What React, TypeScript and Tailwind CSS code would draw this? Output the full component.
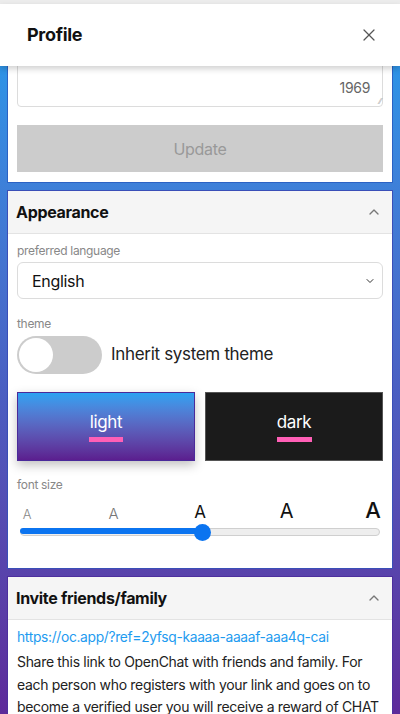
import { ChevronDown, ChevronUp, X } from 'lucide-react';

const sizes = [
  'text-[13px] text-[#888] font-light',
  'text-[15px] text-[#777] font-light',
  'text-[17px] text-[#111]',
  'text-[20px] text-[#111]',
  'text-[22px] text-[#111] font-medium',
];

function SectionHeader({ title }: { title: string }) {
  return (
    <div className="flex items-center justify-between h-[43px] px-[8px] bg-[#f5f5f5] border-b border-[#e3e3e3]">
      <h2 className="text-[16px] font-bold text-[#111]">{title}</h2>
      <ChevronUp className="w-[16px] h-[16px] text-[#777] mr-[2px]" strokeWidth={2} />
    </div>
  );
}

export default function App() {
  return (
    <div
      className="w-[400px] h-[714px] flex flex-col overflow-hidden bg-[#ececec] tracking-[-0.02em]"
      style={{ fontFamily: 'Inter, "Noto Sans", sans-serif' }}
    >
      <div className="h-[4px] shrink-0" />
      <header className="relative z-10 h-[62px] shrink-0 bg-white flex items-center justify-between pl-[27px] pr-[21px] shadow-[0_3px_6px_rgba(0,0,0,0.18)]">
        <h1 className="text-[18px] font-bold text-[#111] -mt-[2px]">Profile</h1>
        <X className="w-[20px] h-[20px] text-[#555]" strokeWidth={1.5} />
      </header>

      <main className="flex-1 overflow-hidden bg-gradient-to-b from-[#2e93e6] via-[#4a5fc2] to-[#5d2a9a] px-[7px]">
        <div className="flex flex-col gap-[7px] -mt-[58px]">
          {/* profile card, scrolled */}
          <section className="bg-white border border-[#2b62c4] px-[9px] pt-[8px] pb-[10px]">
            <div className="relative h-[90px] border border-[#dcdcdc] rounded-[4px] flex items-end justify-end pr-[12px] pb-[8px]">
              <span className="text-[14px] text-[#666]">1969</span>
              <span className="absolute right-[1px] bottom-[1px] text-[7px] leading-none text-[#aaa]">⁄⁄</span>
            </div>
            <button className="mt-[18px] w-full h-[47px] bg-[#cccccc] text-[16px] text-[#999]">Update</button>
          </section>

          {/* appearance card */}
          <section className="bg-white border border-[#3a4fb8]">
            <SectionHeader title="Appearance" />
            <div className="px-[9px] pb-[28px]">
              <p className="mt-[9px] text-[12px] leading-[16px] text-[#888]">preferred language</p>
              <div className="mt-[3px] h-[37px] border border-[#dcdcdc] rounded-[6px] flex items-center justify-between pl-[14px] pr-[6px]">
                <span className="text-[16px] text-[#111]">English</span>
                <ChevronDown className="w-[12px] h-[12px] text-[#333]" strokeWidth={2} />
              </div>
              <p className="mt-[17px] text-[12px] leading-[16px] text-[#888]">theme</p>
              <div className="mt-[4px] flex items-center gap-[9px]">
                <div className="w-[85px] h-[38px] rounded-full bg-[#cccccc] flex items-center px-[2px]">
                  <div className="w-[34px] h-[34px] rounded-full bg-white" />
                </div>
                <span className="text-[17px] text-[#222]">Inherit system theme</span>
              </div>
              <div className="mt-[18px] grid grid-cols-2 gap-[10px]">
                <div className="h-[69px] flex flex-col items-center justify-center bg-gradient-to-b from-[#2aa2f2] to-[#5b1e8f] border border-[#4a2a9a] shadow-[0_4px_10px_rgba(0,0,0,0.25)]">
                  <span className="text-[17px] text-white leading-[22px]">light</span>
                  <span className="mt-[4px] w-[34px] h-[5px] bg-[#ff5fb6]" />
                </div>
                <div className="h-[69px] flex flex-col items-center justify-center bg-[#1b1b1b] border border-[#555]">
                  <span className="text-[17px] text-white leading-[22px]">dark</span>
                  <span className="mt-[4px] w-[35px] h-[5px] bg-[#ff5fb6]" />
                </div>
              </div>
              <p className="mt-[16px] text-[12px] leading-[16px] text-[#888]">font size</p>
              <div className="mt-[4px] flex items-end justify-between h-[24px]">
                {sizes.map((cls, i) => (
                  <span key={i} className="w-[20px] flex justify-center">
                    <span className={`${cls} leading-none`}>A</span>
                  </span>
                ))}
              </div>
              <div className="mt-[3px] relative h-[16px] flex items-center px-[3px]">
                <div className="w-full h-[8px] rounded-full bg-[#eeeeee] border border-[#cfcfcf] flex">
                  <div className="w-1/2 h-full rounded-full bg-[#0b74f0] -m-[1px]" />
                </div>
                <div className="absolute left-[177px] w-[17px] h-[17px] rounded-full bg-[#0b74f0]" />
              </div>
            </div>
          </section>

          {/* invite card */}
          <section className="bg-white border border-[#4d2f9e]">
            <SectionHeader title="Invite friends/family" />
            <div className="px-[9px] pt-[7px]">
              <a className="block text-[13.8px] leading-[20px] text-[#1e9bf0]">https://oc.app/?ref=2yfsq-kaaaa-aaaaf-aaa4q-cai</a>
              <p className="mt-[4px] text-[14px] leading-[22.5px] text-[#222]">
                Share this link to OpenChat with friends and family. For each person who registers with your link and goes on to
                become a verified user you will receive a reward of CHAT tokens.
              </p>
            </div>
          </section>
        </div>
      </main>
    </div>
  );
}
